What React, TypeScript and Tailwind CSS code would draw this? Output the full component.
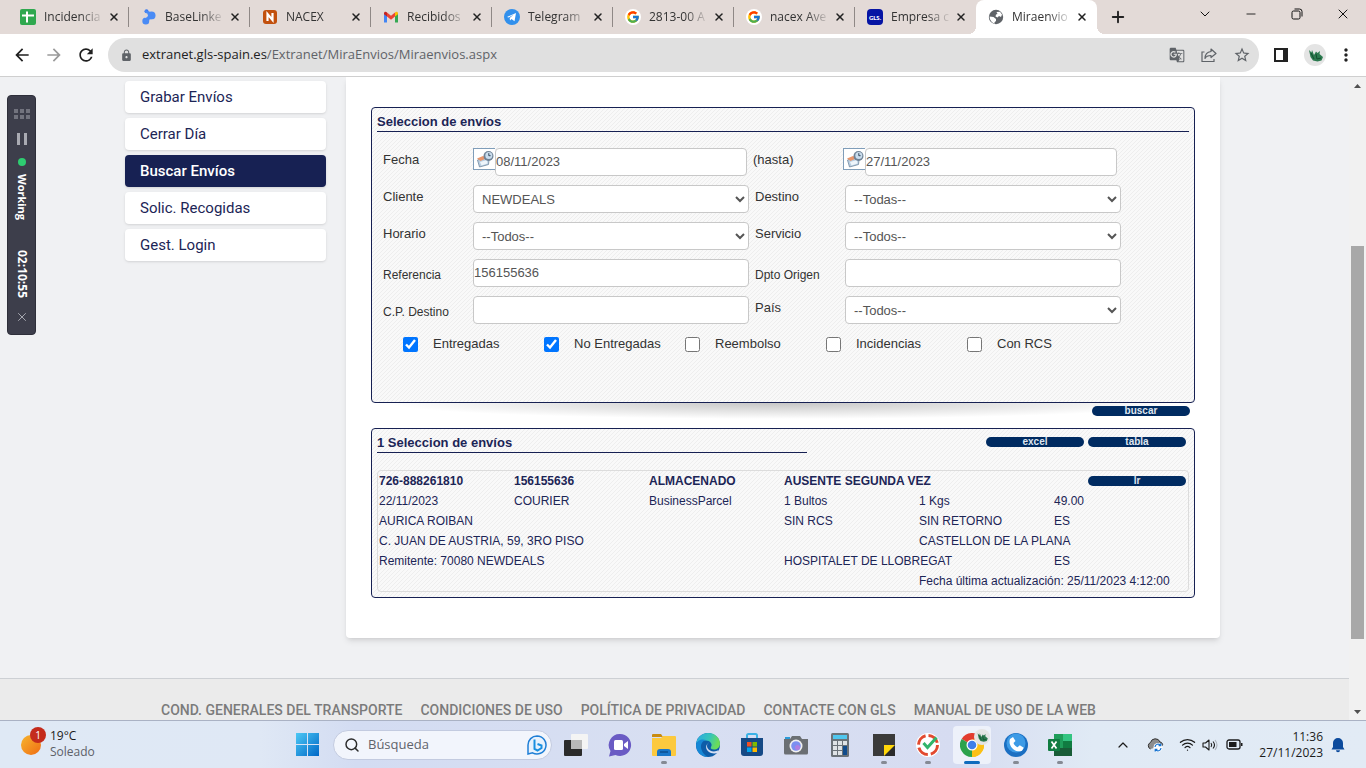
import type { ReactNode } from "react";
import {
  MdArrowBack,
  MdArrowForward,
  MdRefresh,
  MdLock,
  MdGTranslate,
  MdStarBorder,
  MdMoreVert,
} from "react-icons/md";
import { FcGoogle } from "react-icons/fc";
import { ChevronDown, ChevronUp, Minus, Plus, Search, Wifi, X } from "lucide-react";

/* ---------- Browser tabs ---------- */

const SheetIcon = () => (
  <svg viewBox="0 0 16 16" className="size-4">
    <rect width="16" height="16" rx="2" fill="#2fa84f" />
    <path d="M2 6.5h12M7 2.5v11" stroke="#fff" strokeWidth="2" />
  </svg>
);

const BaseLinkerIcon = () => (
  <svg viewBox="0 0 16 16" className="size-4">
    <circle cx="5.500" cy="2.200" r="2" fill="#3b78f0" />
    <circle cx="10.500" cy="6.500" r="4" fill="#4a8bf5" />
    <circle cx="4.800" cy="12" r="3.500" fill="#4a8bf5" />
    <path d="M4 1l8 3-3 6-3 4z" fill="#4a8bf5" />
    <circle cx="4.500" cy="6.300" r="2.400" fill="#e3dad7" />
    <circle cx="11.500" cy="13.500" r="3" fill="#e3dad7" />
  </svg>
);

const NacexIcon = () => (
  <svg viewBox="0 0 16 16" className="size-4">
    <rect x="1" y="1" width="14" height="14" rx="3" fill="#c2500d" />
    <path d="M5.500 12V5l5 6V4" stroke="#fff" strokeWidth="2.2" fill="none" />
  </svg>
);

const GmailIcon = () => (
  <svg viewBox="0 0 16 16" className="size-4">
    <path d="M1 13.5V4l3 2.4v7.1z" fill="#4285f4" />
    <path d="M12 13.5V6.4L15 4v9.5z" fill="#34a853" />
    <path d="M4 3.5l4 3.2 4-3.2v4L8 10.700 4 7.500z" fill="#ea4335" />
    <path d="M1 4.500C1 2.500 2.800 2.300 4 3.400v4.100L1 5.200z" fill="#c5221f" />
    <path d="M15 4.500c0-2-1.800-2.200-3-1.100v4.100l3-2.300z" fill="#fbbc04" />
  </svg>
);

const TelegramIcon = () => (
  <svg viewBox="0 0 16 16" className="size-4">
    <circle cx="8" cy="8" r="8" fill="#3290ec" />
    <path d="M3 7.900l9-3.900-1.500 8.300-3-2.200-1.500 1.400-.3-2.500 4-3.600-5 3.100z" fill="#fff" />
  </svg>
);

const GoogleIcon = () => (
  <span className="flex size-4 items-center justify-center rounded-full bg-white">
    <FcGoogle size={14} />
  </span>
);

const GlsIcon = () => (
  <span className="flex size-4 items-center justify-center rounded-sm bg-[#0614a4] font-['Lato',sans-serif] text-[6px] font-black text-white">
    GLS.
  </span>
);

const GlobeIcon = () => (
  <svg viewBox="0 0 16 16" className="size-4">
    <circle cx="8" cy="8" r="7.200" fill="#5f6368" />
    <path d="M8.500 3l3.500-.3 2 2.800-1 2.500-2-1-1.500 1.500-2-1 .5-2 1.500-.5z" fill="#fff" />
    <path d="M1.500 7.500l4 .5 2.500 2v2l-1.500 1.200.2 1.500C4 14 1.800 11.500 1.500 7.500z" fill="#fff" />
  </svg>
);

const tabs: { title: string; icon: ReactNode; active?: boolean }[] = [
  { title: "Incidencia", icon: <SheetIcon /> },
  { title: "BaseLinke", icon: <BaseLinkerIcon /> },
  { title: "NACEX", icon: <NacexIcon /> },
  { title: "Recibidos", icon: <GmailIcon /> },
  { title: "Telegram", icon: <TelegramIcon /> },
  { title: "2813-00 A", icon: <GoogleIcon /> },
  { title: "nacex Ave", icon: <GoogleIcon /> },
  { title: "Empresa c", icon: <GlsIcon /> },
  { title: "Miraenvio", icon: <GlobeIcon />, active: true },
];

function TabStrip() {
  return (
    <header className="flex h-[34px] shrink-0 items-stretch bg-[#e3dad7] pl-2">
      <ul className="flex">
        {tabs.map((tab, i) => (
          <li
            key={tab.title}
            className={
              tab.active
                ? "relative flex w-[121px] items-center rounded-t-lg bg-white pl-3"
                : "flex w-[121px] items-center pl-3"
            }
          >
            {tab.active && (
              <>
                <span className="absolute bottom-0 -left-2 size-2 bg-[radial-gradient(circle_at_0_0,transparent_8px,white_8px)]" />
                <span className="absolute -right-2 bottom-0 size-2 bg-[radial-gradient(circle_at_100%_0,transparent_8px,white_8px)]" />
              </>
            )}
            <span className="flex size-4 shrink-0 items-center justify-center">{tab.icon}</span>
            <span className="ml-2 w-[60px] shrink-0 mask-r-from-60% text-[12px] whitespace-nowrap text-[#333]">
              {tab.title}
            </span>
            <button type="button" aria-label={`Cerrar ${tab.title}`} className="ml-1 text-[#222]">
              <X size={12} strokeWidth={3} />
            </button>
            {!tab.active && i < 7 && <span className="ml-auto h-5 w-px bg-[#8f8886]" />}
          </li>
        ))}
      </ul>
      <button type="button" aria-label="Nueva pestaña" className="ml-3 text-[#222]">
        <Plus size={18} strokeWidth={2.5} />
      </button>
      <div className="ml-auto flex items-center pb-1.5 text-[#111]">
        <button type="button" aria-label="Buscar pestañas" className="flex w-[46px] justify-center">
          <ChevronDown size={16} strokeWidth={1.5} />
        </button>
        <button type="button" aria-label="Minimizar" className="flex w-[46px] justify-center">
          <Minus size={14} strokeWidth={1.5} />
        </button>
        <button type="button" aria-label="Restaurar" className="flex w-[46px] justify-center">
          <svg viewBox="0 0 12 12" className="size-3" fill="none" stroke="currentColor">
            <rect x="1" y="3" width="8" height="8" rx="1.500" />
            <path d="M3.500 1h5a2.500 2.500 0 0 1 2.500 2.500v5" />
          </svg>
        </button>
        <button type="button" aria-label="Cerrar" className="flex w-[46px] justify-center">
          <X size={16} strokeWidth={1.5} />
        </button>
      </div>
    </header>
  );
}

const CactusAvatar = ({ className }: { className: string }) => (
  <svg viewBox="0 0 22 22" className={className}>
    <circle cx="11" cy="11" r="11" fill="#e4e4e4" />
    <path
      d="M5 6l2.500 2.500L8 6l2 5 2-3.500 1.500 1.500 2.500-2-.5 3 3.500 3-1.500 3.500-4 1-4.500-1-2.500-3.500z"
      fill="#2c7a4f"
    />
    <path d="M7 9l3 6M12 10l1 5 4-1" stroke="#124d2e" fill="none" />
  </svg>
);

function Toolbar() {
  return (
    <div className="flex h-[43px] shrink-0 items-center border-b border-[#cfcfcf] bg-white pl-3">
      <nav className="flex gap-3" aria-label="Navegación">
        <button type="button" aria-label="Atrás" className="text-[#1f1f1f]">
          <MdArrowBack size={20} />
        </button>
        <button type="button" aria-label="Adelante" className="text-[#9a9a9a]">
          <MdArrowForward size={20} />
        </button>
        <button type="button" aria-label="Recargar" className="text-[#1f1f1f]">
          <MdRefresh size={20} />
        </button>
      </nav>
      <div className="ml-3 flex h-[34px] flex-1 items-center rounded-full bg-[#e0e0e0] pr-2 pl-3 text-[#5f6368]">
        <MdLock size={13} />
        <p className="ml-[9px] flex-1 text-[13px]">
          <span className="text-[#222]">extranet.gls-spain.es</span>/Extranet/MiraEnvios/Miraenvios.aspx
        </p>
        <div className="flex items-center gap-4">
          <button type="button" aria-label="Traducir">
            <MdGTranslate size={16} />
          </button>
          <button type="button" aria-label="Compartir">
            <svg viewBox="0 0 16 16" className="size-4" fill="none" stroke="currentColor" strokeWidth="1.200">
              <path d="M3.500 5H1v9.500h12v-2.500" />
              <path d="M10 2l5 4.500-5 4V8.500C7 8.500 5 9.300 4 11.500c0-4 2.500-6.500 6-7z" strokeLinejoin="round" />
            </svg>
          </button>
          <button type="button" aria-label="Favorito">
            <MdStarBorder size={18} />
          </button>
        </div>
      </div>
      <div className="flex items-center pr-2.5">
        <button type="button" aria-label="Panel lateral" className="ml-3.5 px-px">
          <svg viewBox="0 0 14 14" className="size-3.5">
            <rect x="1" y="1" width="12" height="12" fill="none" stroke="#222" strokeWidth="2" />
            <path d="M9 0h5v14H9z" fill="#222" />
          </svg>
        </button>
        <button type="button" aria-label="Perfil" className="ml-[15px]">
          <CactusAvatar className="size-[22px]" />
        </button>
        <button type="button" aria-label="Menú" className="ml-2.5 text-[#222]">
          <MdMoreVert size={20} />
        </button>
      </div>
    </div>
  );
}

/* ---------- Page ---------- */

const menu = ["Grabar Envíos", "Cerrar Día", "Buscar Envíos", "Solic. Recogidas", "Gest. Login"];

function SideMenu() {
  return (
    <nav className="flex w-[201px] shrink-0 flex-col gap-[5px] pt-1 font-['Roboto',sans-serif] text-[15px]">
      {menu.map((item) => (
        <a
          key={item}
          href="#"
          className={
            item === "Buscar Envíos"
              ? "flex h-8 items-center rounded bg-[#172153] pl-[15px] font-medium text-white shadow"
              : "flex h-8 items-center rounded bg-white pl-[15px] text-[#1c2556] shadow"
          }
        >
          {item}
        </a>
      ))}
    </nav>
  );
}

const panel =
  "rounded border border-[#172153] bg-[#f9f9f9] bg-[linear-gradient(135deg,#eeeeee_12.5%,transparent_12.5%_50%,#eeeeee_50%_62.5%,transparent_62.5%)] bg-size-[4px_4px]";
const field = "h-7 w-full rounded-sm border border-[#c8c8c8] bg-white text-[13px] text-[#555]";

function DateField({ id, label, value }: { id: string; label: string; value: string }) {
  return (
    <div className="flex items-start">
      <button
        type="button"
        aria-label={`Calendario ${label}`}
        className="flex size-[22px] shrink-0 items-center justify-center border border-r-0 border-[#7f9db9] bg-white"
      >
        <svg viewBox="0 0 18 18" className="size-[18px]">
          <path d="M1.500 10L7 8l6 2-.5 4.500-9 2.500z" fill="#b9cfe2" stroke="#71889e" strokeWidth=".8" />
          <path d="M1 8.500L7 6l4 2-6.500 3z" fill="#e8956a" />
          <path d="M4 12l7-2 .5 3.500-6 2z" fill="#eef5fb" />
          <circle cx="12.500" cy="6" r="5" fill="#6f8296" />
          <circle cx="12.800" cy="5.600" r="3.500" fill="#c9dcec" />
          <path d="M12.800 3.200v2.500h1.800" stroke="#34475c" fill="none" />
        </svg>
      </button>
      <input id={id} defaultValue={value} className={`${field} pb-0.5`} />
    </div>
  );
}

function SelectField({ id, value }: { id: string; value: string }) {
  return (
    <select id={id} defaultValue={value} className={`${field} pl-1`}>
      <option>{value}</option>
    </select>
  );
}

function SearchPanel() {
  const grid = "grid grid-cols-[90px_276px_96px_276px] items-start";
  const checks: [string, boolean][] = [
    ["Entregadas", true],
    ["No Entregadas", true],
    ["Reembolso", false],
    ["Incidencias", false],
    ["Con RCS", false],
  ];
  return (
    <section className={`${panel} h-[296px] px-[5px] pt-1`}>
      <h2 className="border-b border-[#172153] text-[13px] leading-[19px] font-bold text-[#1c2556]">
        Seleccion de envíos
      </h2>
      <form className="flex flex-col gap-[9px] pt-4 pl-1.5 text-[13px] leading-6 text-[#333]">
        <div className="grid grid-cols-[90px_274px_96px_274px] items-start">
          <label htmlFor="fecha">Fecha</label>
          <DateField id="fecha" label="desde" value="08/11/2023" />
          <label htmlFor="hasta" className="pl-1.5">
            (hasta)
          </label>
          <DateField id="hasta" label="hasta" value="27/11/2023" />
        </div>
        <div className={grid}>
          <label htmlFor="cliente">Cliente</label>
          <SelectField id="cliente" value="NEWDEALS" />
          <label htmlFor="destino" className="pl-1.5">
            Destino
          </label>
          <SelectField id="destino" value="--Todas--" />
        </div>
        <div className={grid}>
          <label htmlFor="horario">Horario</label>
          <SelectField id="horario" value="--Todos--" />
          <label htmlFor="servicio" className="pl-1.5">
            Servicio
          </label>
          <SelectField id="servicio" value="--Todos--" />
        </div>
        <div className={grid}>
          <label htmlFor="referencia" className="self-end text-[12px] leading-6">
            Referencia
          </label>
          <input id="referencia" defaultValue="156155636" className={`${field} pb-0.5`} />
          <label htmlFor="dpto" className="self-end pl-1.5 text-[12px] leading-6">
            Dpto Origen
          </label>
          <input id="dpto" className={field} />
        </div>
        <div className={grid}>
          <label htmlFor="cp" className="self-end text-[12px] leading-6">
            C.P. Destino
          </label>
          <input id="cp" className={field} />
          <label htmlFor="pais" className="pl-1.5">
            País
          </label>
          <SelectField id="pais" value="--Todos--" />
        </div>
        <div className="flex pl-5 leading-[22px]">
          {checks.map(([label, on]) => (
            <label key={label} className="flex w-[141px] items-center gap-[15px] whitespace-nowrap">
              <input type="checkbox" defaultChecked={on} className="size-[15px] shrink-0 accent-[#0075ff]" />
              {label}
            </label>
          ))}
        </div>
      </form>
    </section>
  );
}

function Pill({ children }: { children: string }) {
  return (
    <button
      type="button"
      className="flex h-2.5 w-[98px] items-center justify-center rounded-full bg-[#002b61] text-[10px] leading-[10px] font-bold text-[#dfe6f0]"
    >
      {children}
    </button>
  );
}

function ResultsPanel() {
  return (
    <section className={`${panel} px-[5px] pt-1 pb-[5px]`}>
      <div className="flex items-start">
        <h2 className="w-[430px] border-b border-[#172153] text-[13px] leading-[19px] font-bold text-[#1c2556]">
          1 Seleccion de envíos
        </h2>
        <div className="ml-auto flex gap-1 pt-1 pr-[3px]">
          <Pill>excel</Pill>
          <Pill>tabla</Pill>
        </div>
      </div>
      <div className="mt-[17px] rounded border border-[#dcdcdc]">
        <table className="w-full table-fixed text-[12px] leading-5 whitespace-nowrap text-[#1c2556] [&_td]:pl-px">
          <tbody>
            <tr className="font-bold">
              <td>726-888261810</td>
              <td>156155636</td>
              <td>ALMACENADO</td>
              <td colSpan={2}>AUSENTE SEGUNDA VEZ</td>
              <td>
                <div className="flex justify-end pr-0.5">
                  <Pill>Ir</Pill>
                </div>
              </td>
            </tr>
            <tr>
              <td>22/11/2023</td>
              <td>COURIER</td>
              <td>BusinessParcel</td>
              <td>1 Bultos</td>
              <td>1 Kgs</td>
              <td>49.00</td>
            </tr>
            <tr>
              <td colSpan={3}>AURICA ROIBAN</td>
              <td>SIN RCS</td>
              <td>SIN RETORNO</td>
              <td>ES</td>
            </tr>
            <tr>
              <td colSpan={4}>C. JUAN DE AUSTRIA, 59, 3RO PISO</td>
              <td colSpan={2}>CASTELLON DE LA PLANA</td>
            </tr>
            <tr>
              <td colSpan={3}>Remitente: 70080 NEWDEALS</td>
              <td colSpan={2}>HOSPITALET DE LLOBREGAT</td>
              <td>ES</td>
            </tr>
            <tr>
              <td colSpan={4} />
              <td colSpan={2}>Fecha última actualización: 25/11/2023 4:12:00</td>
            </tr>
          </tbody>
        </table>
      </div>
    </section>
  );
}

const footerLinks = [
  "COND. GENERALES DEL TRANSPORTE",
  "CONDICIONES DE USO",
  "POLÍTICA DE PRIVACIDAD",
  "CONTACTE CON GLS",
  "MANUAL DE USO DE LA WEB",
];

function Page() {
  return (
    <div className="flex min-w-0 flex-1 flex-col overflow-hidden bg-[#f0f1f3] font-['Liberation_Sans',Arial,sans-serif]">
      <div className="mx-auto flex gap-5 pr-1">
        <SideMenu />
        <main className="w-[874px] rounded-b bg-white px-[25px] pt-[30px] pb-10 shadow-md">
          <SearchPanel />
          <div className="flex h-[25px] justify-end bg-[radial-gradient(ellipse_48%_16px_at_50%_0,#c6c6c6,transparent)] pt-[3px] pr-[5px]">
            <Pill>buscar</Pill>
          </div>
          <ResultsPanel />
        </main>
      </div>
      <footer className="mt-10 flex-1 overflow-hidden border-t border-[#cdd0d4] bg-[#ebebeb] pt-[21px] pl-[161px]">
        <ul className="flex gap-[18px] font-['Roboto',sans-serif] text-[14px] leading-5 font-medium whitespace-nowrap text-[#7b7b7b]">
          {footerLinks.map((l) => (
            <li key={l}>
              <a href="#">{l}</a>
            </li>
          ))}
        </ul>
      </footer>
    </div>
  );
}

function ScrollBar() {
  return (
    <div className="flex w-[17px] shrink-0 flex-col items-center bg-[#f1f1f1]">
      <svg viewBox="0 0 17 17" className="size-[17px]">
        <path d="M5 11l3.500-4 3.500 4z" fill="#505050" />
      </svg>
      <div className="grow-[152]" />
      <div className="w-[13px] grow-[393] bg-[#a8a8a8]" />
      <div className="grow-[64]" />
      <svg viewBox="0 0 17 17" className="size-[17px]">
        <path d="M5 7l3.500 4L12 7z" fill="#505050" />
      </svg>
    </div>
  );
}

function TimerWidget() {
  return (
    <aside className="absolute top-[95px] left-[7px] flex h-60 w-[29px] flex-col items-center rounded-sm border border-[#2e2f3a] bg-[#3d3e4b] text-[12px] leading-4 font-bold text-white">
      <svg viewBox="0 0 16 10" className="mt-[13px] h-2.5 w-4 shrink-0" fill="#72737e">
        <path d="M0 0h4v4H0zM6 0h4v4H6zM12 0h4v4h-4zM0 6h4v4H0zM6 6h4v4H6zM12 6h4v4h-4z" />
      </svg>
      <svg viewBox="0 0 10 12" className="mt-3.5 h-3 w-2.5 shrink-0" fill="#a9aab2">
        <path d="M0 0h3v12H0zM7 0h3v12H7z" />
      </svg>
      <span className="mt-[13px] size-2 shrink-0 rounded-full bg-[#2ecc71]" />
      <span className="mt-2 text-[11px] [writing-mode:vertical-rl]">Working</span>
      <span className="mt-auto [writing-mode:vertical-rl]">02:10:55</span>
      <X size={14} strokeWidth={1.5} className="mt-3 mb-2.5 shrink-0 text-[#b5b6be]" />
    </aside>
  );
}

/* ---------- Desktop taskbar ---------- */

const TaskView = () => (
  <svg viewBox="0 0 24 24" className="size-6">
    <rect x="7" y="1" width="17" height="15" rx="1" fill="#f4f4f4" />
    <rect x="0" y="7" width="18" height="16" rx="1" fill="#2b2b2b" />
    <path d="M7 7h11v9H7z" fill="#b9b9b9" />
  </svg>
);

const ChatApp = () => (
  <svg viewBox="0 0 24 24" className="size-6">
    <path d="M12 1a11 11 0 1 1-4.500 21L1 23.500 2.500 18A11 11 0 0 1 12 1z" fill="#6a5bc4" />
    <rect x="6" y="7" width="9" height="10" rx="1.500" fill="#fff" />
    <path d="M16 11l4-3v8l-4-3z" fill="#fff" />
  </svg>
);

const Explorer = () => (
  <svg viewBox="0 0 24 24" className="size-6">
    <path d="M0 2q0-1 1-1h8l2 3H0z" fill="#c98b10" />
    <path d="M0 5h9l2-2h12q1 0 1 1v18q0 1-1 1H1q-1 0-1-1z" fill="#fcc93e" />
    <path d="M5 23v-4q0-3 3-3h8q3 0 3 3v4z" fill="#1976c9" />
    <path d="M8 19h8" stroke="#0b4f91" strokeWidth="1.500" />
  </svg>
);

const Edge = () => (
  <svg viewBox="0 0 24 24" className="size-6">
    <defs>
      <linearGradient id="edgeTop" x1="0" y1="0" x2="1" y2=".3">
        <stop offset="0" stopColor="#2aa7e8" />
        <stop offset=".6" stopColor="#36c5b8" />
        <stop offset="1" stopColor="#6bdc58" />
      </linearGradient>
    </defs>
    <circle cx="12" cy="12" r="12" fill="#0d5ca8" />
    <path d="M0 11C1 4 6 0 12 0c7 0 12 5 12 10.500 0 4-3 6-6 6-2.500 0-4-1-3-2.500 2-3-1-6.500-5-6.500-5 0-9 1.500-10 3.500z" fill="url(#edgeTop)" />
    <path d="M0 12c1-5 6-6.500 10-5 -4 1-6 5-4.500 9.500 1 3.500 3.500 6 6.500 7.500C5 24 0 19 0 12z" fill="#1687d6" />
    <path d="M13 9.500c-2 1-2.500 3.500-1.500 5.500 2 3.500 7 4.500 11.500 2-1 1.500-1.500 1.500-1.500 1.500 2.500-.5 3.500-1 2.500 1.500-3 0-6 1-9 0-5-2-7-7-2-10.500z" fill="#d6def2" />
  </svg>
);

const Store = () => (
  <svg viewBox="0 0 24 24" className="size-6">
    <path d="M7 6V2.500Q7 1 8.500 1h7Q17 1 17 2.500V6" fill="none" stroke="#3bb2e6" strokeWidth="2" />
    <path d="M1 5h22v15q0 3-3 3H4q-3 0-3-3z" fill="#164a86" />
    <path d="M7 9h4.500v4.500H7z" fill="#f25022" />
    <path d="M12.500 9H17v4.500h-4.500z" fill="#7fba00" />
    <path d="M7 14.500h4.500V19H7z" fill="#00a4ef" />
    <path d="M12.500 14.500H17V19h-4.500z" fill="#ffb900" />
  </svg>
);

const CameraApp = () => (
  <svg viewBox="0 0 24 24" className="size-6">
    <path d="M1 4h5v3H1z" fill="#2b9bd8" />
    <path d="M0 6h6l2-3h8l2 3h6v14q0 1.500-1.500 1.500h-21Q0 21.500 0 20z" fill="#6b6f73" />
    <circle cx="12" cy="13" r="6.500" fill="#f0f0f0" />
    <circle cx="12" cy="13" r="4.800" fill="#7c8ff0" />
    <circle cx="13.500" cy="14.500" r="2.500" fill="#b07fe0" />
  </svg>
);

const CalculatorApp = () => (
  <svg viewBox="0 0 24 24" className="size-6">
    <rect x="3" y="0" width="18" height="24" rx="1.500" fill="#6b7278" />
    <path d="M5 2h14v4H5z" fill="#4fc6ee" />
    <path d="M5 8h4v4H5zM10 8h4v4h-4zM15 8h4v4h-4zM5 13h4v4H5zM10 13h4v4h-4zM5 18h4v4H5zM10 18h4v4h-4z" fill="#dfe3e6" />
    <path d="M15 13h4v9h-4z" fill="#114c8c" />
  </svg>
);

const Notes = () => (
  <svg viewBox="0 0 24 24" className="size-6">
    <path d="M1 1h22v11L12 23H1z" fill="#3a3a3a" />
    <path d="M12 12h11v11H12z" fill="#2a2a2a" />
    <path d="M12 12h11L12 23z" fill="#ffd60a" />
  </svg>
);

const TimerApp = () => (
  <svg viewBox="0 0 24 24" className="size-6">
    <circle cx="12" cy="12" r="12" fill="#fff" />
    <circle cx="12" cy="12" r="9.500" fill="none" stroke="#e2492f" strokeWidth="3" strokeDasharray="12 3" />
    <path d="M7.500 10l4 4.500 9-10" fill="none" stroke="#31b56b" strokeWidth="3" />
  </svg>
);

const ChromeApp = () => (
  <span className="relative flex">
    <svg viewBox="0 0 24 24" className="size-6">
      <path d="M12 12L1.600 6A12 12 0 0 1 22.400 6z" fill="#e23c2e" />
      <path d="M12 12L22.400 6A12 12 0 0 1 12 24z" fill="#fbc116" />
      <path d="M12 12v12A12 12 0 0 1 1.600 6z" fill="#2ba24c" />
      <path d="M12 6.500h10.700A12 12 0 0 1 12 24l4.800-9.300z" fill="#fbc116" />
      <circle cx="12" cy="12" r="5.500" fill="#fff" />
      <circle cx="12" cy="12" r="4.300" fill="#3f7fe8" />
    </svg>
    <CactusAvatar className="absolute -top-1 -right-1.5 size-4" />
  </span>
);

const PhoneApp = () => (
  <svg viewBox="0 0 24 24" className="size-6">
    <circle cx="12" cy="12" r="12" fill="#1b6fc2" />
    <circle cx="12" cy="10" r="9.500" fill="#3d9be6" />
    <path d="M6 6l3-2 2.500 4L9.500 10c.8 2 2 3.400 4 4.200l2.300-2 4 2.600-1.800 3C11.500 20.500 3.500 13 6 6z" fill="#fff" />
  </svg>
);

const ExcelApp = () => (
  <svg viewBox="0 0 24 24" className="size-6">
    <path d="M6 1h9v22H6z" fill="#1f9d5a" />
    <path d="M15 1h9v7h-9z" fill="#33c481" />
    <path d="M15 8h9v7h-9z" fill="#107c41" />
    <path d="M6 15h18v8H6z" fill="#185c37" />
    <rect x="0" y="6" width="12" height="12" rx="1" fill="#107c41" />
    <path d="M3.500 8.500l5 7M8.500 8.500l-5 7" stroke="#fff" strokeWidth="1.700" />
  </svg>
);

const apps: { name: string; icon: ReactNode; state?: "open" | "active" }[] = [
  { name: "Vista de tareas", icon: <TaskView /> },
  { name: "Chat", icon: <ChatApp /> },
  { name: "Explorador", icon: <Explorer />, state: "open" },
  { name: "Edge", icon: <Edge /> },
  { name: "Store", icon: <Store /> },
  { name: "Cámara", icon: <CameraApp /> },
  { name: "Calculadora", icon: <CalculatorApp /> },
  { name: "Notas", icon: <Notes />, state: "open" },
  { name: "Control horario", icon: <TimerApp />, state: "open" },
  { name: "Chrome", icon: <ChromeApp />, state: "active" },
  { name: "Teléfono", icon: <PhoneApp />, state: "open" },
  { name: "Excel", icon: <ExcelApp />, state: "open" },
];

function Taskbar() {
  return (
    <footer className="flex h-12 shrink-0 items-center border-t border-[#aab2c4] bg-[linear-gradient(90deg,#dfe9f5_0%,#dfe8f5_19%,#d3dcf2_26%,#d8dff2_50%,#d6dcf1_70%,#e0eaf5_80%,#e2ebf5_100%)]">
      <div className="flex w-[285px] shrink-0 items-center gap-1 pb-0.5 pl-5 text-[12px] leading-4">
        <div className="relative size-[26px]">
          <span className="absolute bottom-0.5 left-px size-5 rounded-full bg-linear-to-br from-[#f5b52e] to-[#ee6a12]" />
          <span className="absolute -top-1 right-0 flex size-4 items-center justify-center rounded-full bg-[#c42b1c] text-[10px] text-white">
            1
          </span>
        </div>
        <div>
          <p className="text-[#1b1b1b]">19°C</p>
          <p className="text-[#5c6068]">Soleado</p>
        </div>
      </div>
      <button type="button" aria-label="Inicio" className="flex w-11 shrink-0 justify-center">
        <svg viewBox="0 0 23 23" className="size-[23px]">
          <defs>
            <linearGradient id="winLogo" x1="0" y1="0" x2="1" y2="1">
              <stop offset="0" stopColor="#4cc8f5" />
              <stop offset="1" stopColor="#0067c6" />
            </linearGradient>
          </defs>
          <path d="M0 0h11v11H0zM12 0h11v11H12zM0 12h11v11H0zM12 12h11v11H12z" fill="url(#winLogo)" />
        </svg>
      </button>
      <div className="ml-1 flex h-[30px] w-[219px] shrink-0 items-center rounded-full border border-[#c3cbe0] bg-[#f2f5fc] pr-1 pl-2.5">
        <Search size={16} strokeWidth={2.2} className="shrink-0 text-[#2b2b2b]" />
        <input
          aria-label="Búsqueda"
          placeholder="Búsqueda"
          className="ml-2 min-w-0 flex-1 bg-transparent text-[13px] placeholder:text-[#5f636b]"
        />
        <svg viewBox="0 0 20 20" className="size-5 shrink-0">
          <path d="M10 1a9 9 0 1 1-4.500 16.800L1 19V10a9 9 0 0 1 9-9z" fill="#e8f2fd" stroke="#1f7fd6" strokeWidth="1.500" />
          <path d="M7.500 4.500v9.500l3 1.500 4-2.500v-2.500l-4-1.500" fill="none" stroke="#1a8fe0" strokeWidth="2" />
        </svg>
      </div>
      <ul className="ml-0.5 flex">
        {apps.map((app) => (
          <li key={app.name} className="flex w-11 shrink-0 justify-center">
            <button
              type="button"
              aria-label={app.name}
              className={
                app.state === "active"
                  ? "relative flex h-[38px] w-[38px] items-center justify-center rounded bg-[#edf1fa]"
                  : "relative flex h-[38px] w-[38px] items-center justify-center"
              }
            >
              {app.icon}
              {app.state === "open" && <span className="absolute bottom-0 h-[3px] w-1.5 rounded-full bg-[#858a94]" />}
              {app.state === "active" && <span className="absolute bottom-0 h-[3px] w-4 rounded-full bg-[#0f6cbd]" />}
            </button>
          </li>
        ))}
      </ul>
      <div className="ml-auto flex shrink-0 items-center pr-[21px] text-[#1b1b1b]">
        <ChevronUp size={16} strokeWidth={1.8} />
        <svg viewBox="0 0 18 16" className="ml-[15px] h-4 w-[18px]">
          <path d="M4.500 12a3.500 3.500 0 0 1 0-6.500A5 5 0 0 1 14 5c2 .3 3 2 2.500 3.500" fill="#8d8d8d" stroke="#333" />
          <circle cx="12" cy="10.500" r="4.500" fill="#fff" />
          <path d="M9 10a3 3 0 0 1 5.500-1.500M15 11a3 3 0 0 1-5.500 1.500M14.800 6.500v2.200h-2.200M9.200 14.500v-2.200h2.200" fill="none" stroke="#1673d1" strokeWidth="1.200" />
        </svg>
        <Wifi size={17} strokeWidth={1.8} className="ml-[15px]" />
        <svg viewBox="0 0 16 16" className="ml-1.5 size-4" fill="none" stroke="currentColor" strokeWidth="1.100">
          <path d="M1 6h2.500L7 3v10l-3.500-3H1z" strokeLinejoin="round" />
          <path d="M9 6q1.500 2 0 4M11 4.500q3 3.500 0 7" />
          <path d="M13 3q4 5 0 10" stroke="#aeb4bd" />
        </svg>
        <svg viewBox="0 0 17 12" className="ml-2 h-3 w-[17px]">
          <rect x="1" y="1" width="13" height="9" rx="2" fill="none" stroke="#1b1b1b" strokeWidth="1.300" />
          <path d="M3 3h7.500v5H3zM15 4h1.500v3H15z" fill="#1b1b1b" />
        </svg>
        <div className="ml-4 text-right text-[12px] leading-4">
          <p>11:36</p>
          <p>27/11/2023</p>
        </div>
        <svg viewBox="0 0 14 16" className="ml-2 h-4 w-3.5" fill="#0b4a9c">
          <path d="M7 1a5 5 0 0 1 5 5v4l1.500 2.500H.5L2 10V6a5 5 0 0 1 5-5zM5 13.300h4a2 2 0 0 1-4 0z" />
        </svg>
      </div>
    </footer>
  );
}

export default function App() {
  return (
    <div className="relative flex h-screen flex-col overflow-hidden font-['Open_Sans','Noto_Sans',sans-serif]">
      <TabStrip />
      <Toolbar />
      <div className="flex min-h-0 flex-1">
        <Page />
        <ScrollBar />
      </div>
      <TimerWidget />
      <Taskbar />
    </div>
  );
}
